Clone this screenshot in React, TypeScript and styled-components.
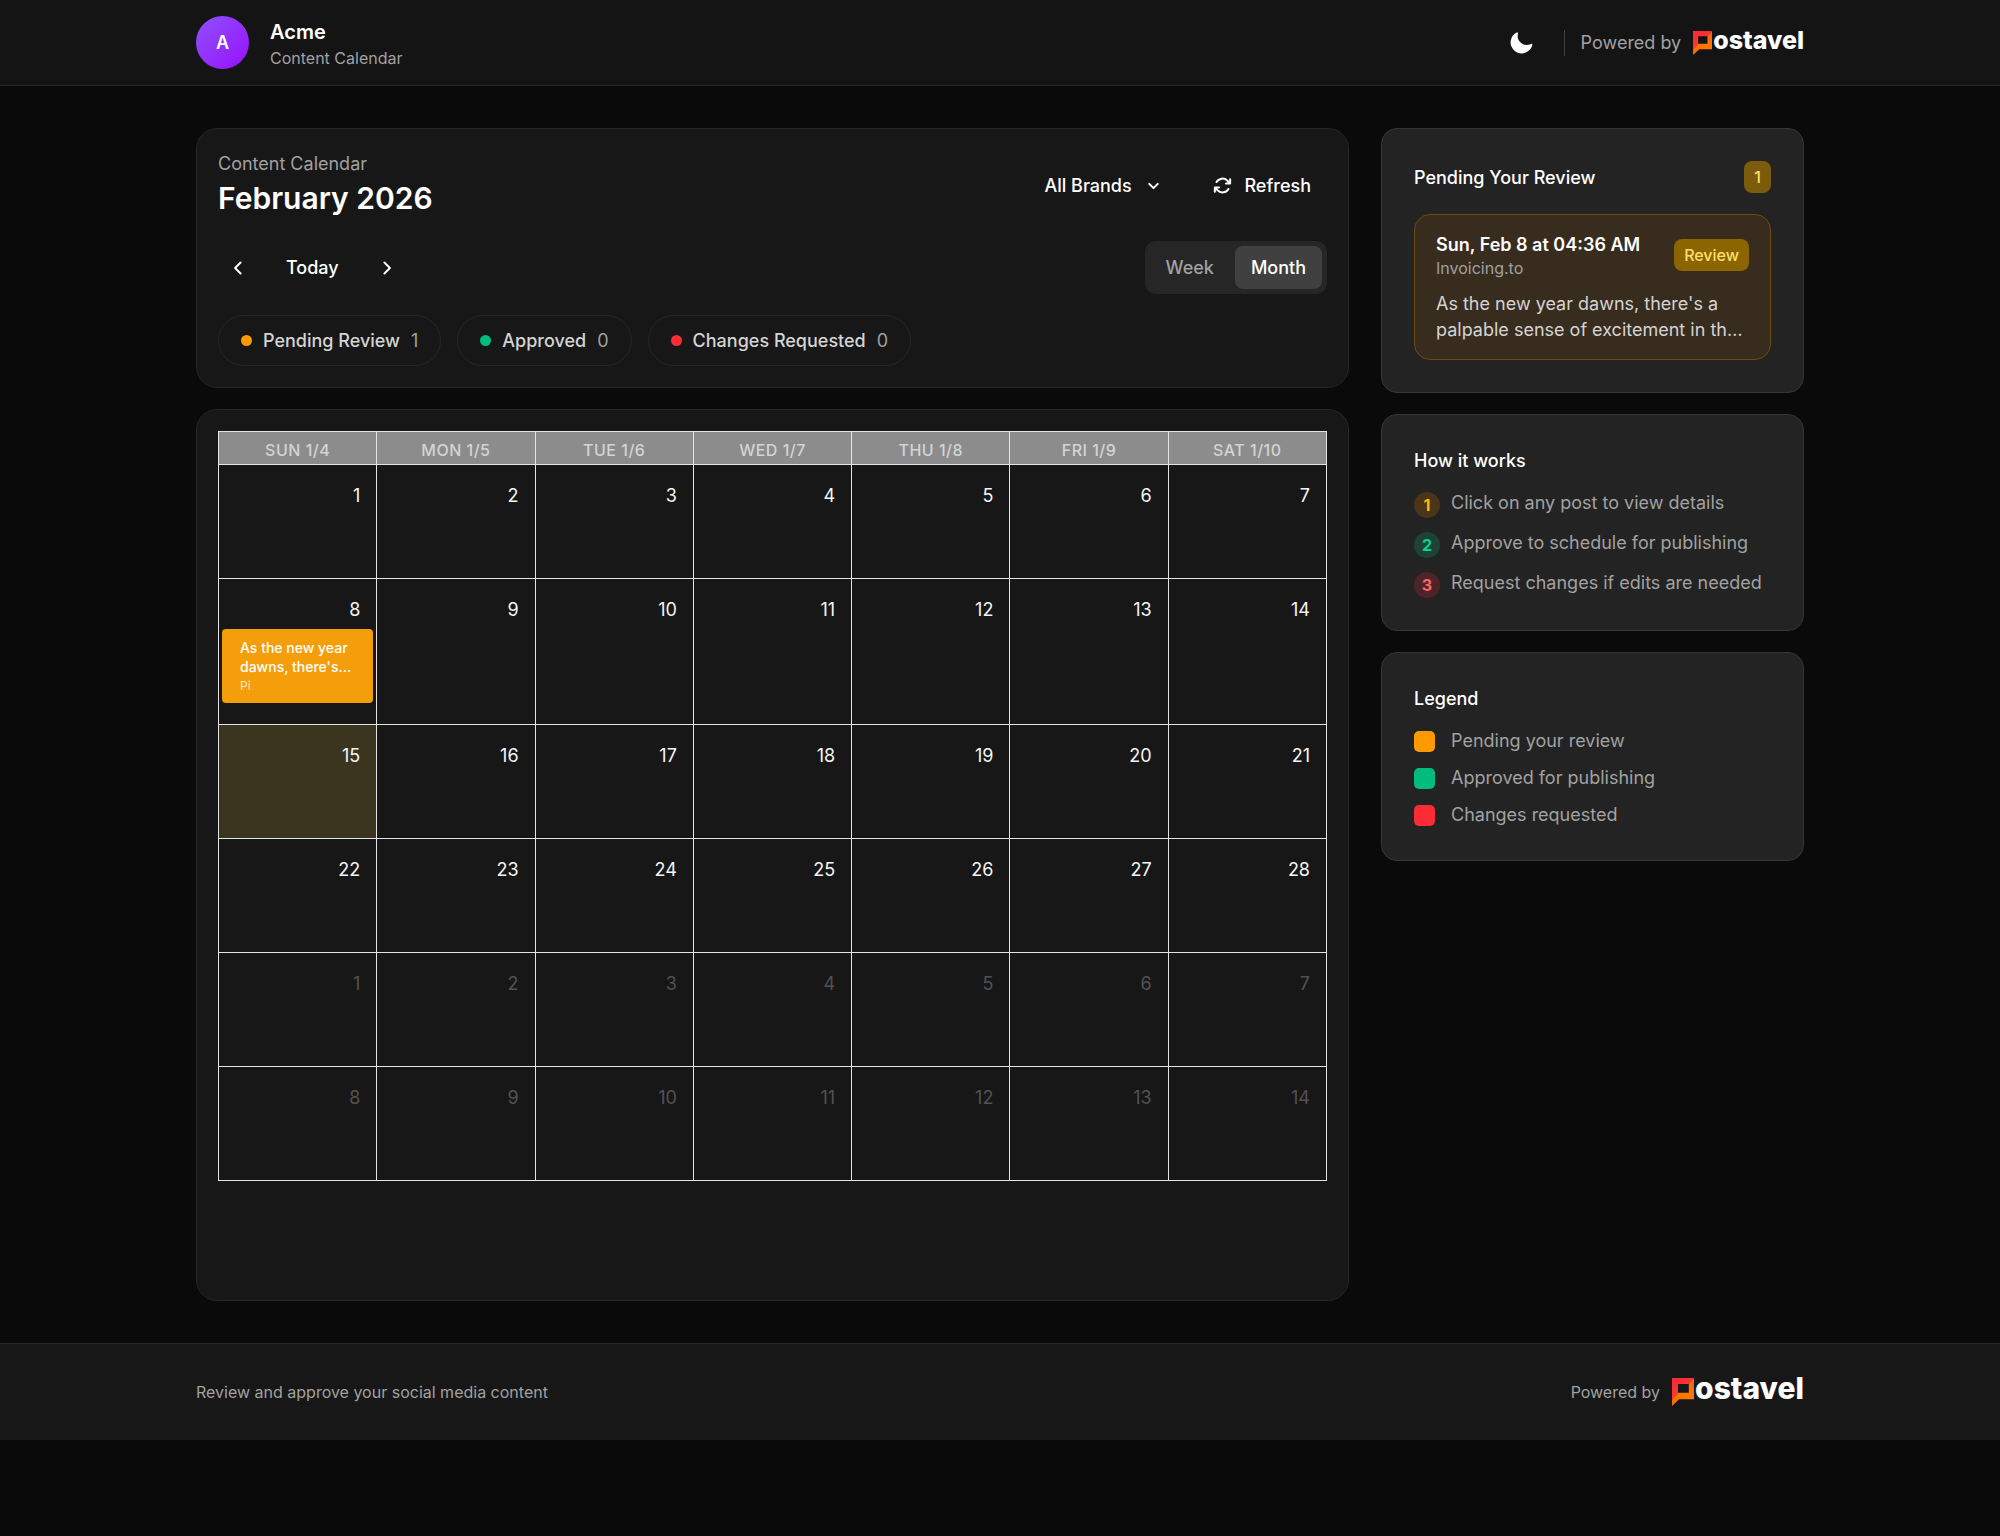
import React, { useState } from "react";
import styled, { createGlobalStyle } from "styled-components";

const GlobalStyle = createGlobalStyle`
  *, *::before, *::after { box-sizing: border-box; }
  body {
    margin: 0;
    background: #0a0a0a;
    color: #fff;
    font-family: Inter, "Liberation Sans", sans-serif;
    font-size: 18px;
    line-height: 27px;
  }
  h1, h2, p, ul, ol { margin: 0; padding: 0; font-weight: 400; }
  ul, ol { list-style: none; }
  button, select { font: inherit; color: inherit; background: none; border: 0; cursor: pointer; }
`;

/* ---------- shared ---------- */

const Container = styled.div`
  max-width: 1692px;
  margin: 0 auto;
  padding: 0 42px;
`;

const Icon = styled.svg<{ $size: number }>`
  display: block;
  flex: none;
  width: ${(p) => p.$size}px;
  height: ${(p) => p.$size}px;
  fill: currentColor;
`;

const Muted = styled.span<{ $small?: boolean }>`
  color: #a1a1a1;
  font-size: ${(p) => (p.$small ? 16 : 18)}px;
  line-height: ${(p) => (p.$small ? 21 : 27)}px;
`;

/* ---------- brand ---------- */

const BrandLink = styled.a<{ $large?: boolean }>`
  display: flex;
  align-items: flex-start;
  gap: 1px;
  color: #fff;
  text-decoration: none;
  font-weight: 800;
  font-size: ${(p) => (p.$large ? 30 : 25)}px;
  line-height: ${(p) => (p.$large ? 20 : 18)}px;
  svg {
    display: block;
    flex: none;
    width: ${(p) => (p.$large ? 22 : 19)}px;
    height: ${(p) => (p.$large ? 28 : 24)}px;
  }
`;

function Brand({ large }: { large?: boolean }) {
  const id = large ? "brand-lg" : "brand-sm";
  return (
    <BrandLink href="#postavel" $large={large}>
      <svg viewBox="0 0 55 70" preserveAspectRatio="none" aria-hidden="true">
        <defs>
          <linearGradient id={`${id}-r`} x1="0" y1="0" x2="0.6" y2="1">
            <stop offset="0.3" stopColor="#fb2c36" />
            <stop offset="1" stopColor="#f4511e" />
          </linearGradient>
          <linearGradient id={`${id}-o`} x1="1" y1="0" x2="0" y2="1">
            <stop offset="0" stopColor="#f4581c" />
            <stop offset="0.4" stopColor="#ff7a00" />
            <stop offset="1" stopColor="#ff6a00" />
          </linearGradient>
        </defs>
        <path fill={`url(#${id}-r)`} d="M0 0H55L42 15H15V37L0 58Z" />
        <path fill={`url(#${id}-o)`} d="M55 0V53H18L0 70V56L15 37H42V15Z" />
      </svg>
      <span>ostavel</span>
    </BrandLink>
  );
}

/* ---------- header ---------- */

const TopBar = styled.header`
  background: #141414;
  border-bottom: 1px solid #262626;
`;

const BarRow = styled(Container)<{ $pad: number }>`
  display: flex;
  align-items: center;
  justify-content: space-between;
  padding-top: ${(p) => p.$pad}px;
  padding-bottom: ${(p) => p.$pad}px;
`;

const Group = styled.div<{ $gap: number }>`
  display: flex;
  align-items: center;
  gap: ${(p) => p.$gap}px;
`;

const Avatar = styled.div`
  display: grid;
  place-items: center;
  width: 53px;
  height: 53px;
  border-radius: 50%;
  background: linear-gradient(135deg, #8e51ff, #9810fa);
  font-size: 18px;
  font-weight: 600;
`;

const Stack = styled.div`
  display: flex;
  flex-direction: column;
`;

const ClientName = styled.span`
  font-size: 20px;
  line-height: 32px;
  font-weight: 600;
`;

const ThemeButton = styled.button`
  padding: 13px;
`;

const Divider = styled.span`
  width: 1px;
  height: 26px;
  background: #404040;
  margin-left: 1px;
`;

/* ---------- page grid ---------- */

const Page = styled(Container)`
  display: grid;
  grid-template-columns: minmax(0, 1fr) 423px;
  gap: 32px;
  align-items: start;
  padding-top: 42px;
  padding-bottom: 42px;
`;

const Column = styled.div`
  display: flex;
  flex-direction: column;
  gap: 21px;
`;

const Panel = styled.section`
  background: #171717;
  border: 1px solid #262626;
  border-radius: 21px;
  padding: 21px;
  display: flex;
  flex-direction: column;
  gap: 21px;
`;

const CalendarPanel = styled(Panel)`
  min-height: 892px;
`;

const Row = styled.div`
  display: flex;
  align-items: center;
  justify-content: space-between;
`;

const Title = styled.h1`
  font-size: 30px;
  line-height: 43px;
  font-weight: 600;
`;

const Control = styled.button`
  display: flex;
  align-items: center;
  gap: 11px;
  padding: 13px 16px;
  border-radius: 11px;
  font-weight: 500;
`;

const BrandPicker = styled.label`
  display: flex;
  align-items: center;
  gap: 11px;
  padding: 13px 16px;
  font-weight: 500;
  select {
    appearance: none;
    padding: 0;
    outline: 0;
  }
`;

const NavButton = styled.button`
  display: grid;
  place-items: center;
  padding: 8px;
`;

const NavToday = styled(Control)`
  padding: 13px 21px;
`;

const Segments = styled.div`
  display: flex;
  gap: 5px;
  padding: 5px;
  border-radius: 11px;
  background: #262626;
`;

const Segment = styled.button<{ $active: boolean }>`
  padding: 8px 16px;
  border-radius: 8px;
  font-weight: 500;
  background: ${(p) => (p.$active ? "#404040" : "transparent")};
  color: ${(p) => (p.$active ? "#fff" : "#a1a1a1")};
`;

const Chip = styled.button`
  display: flex;
  align-items: center;
  gap: 11px;
  padding: 11px 22px;
  border: 1px solid #262626;
  border-radius: 26px;
  color: #d4d4d4;
  font-weight: 500;
`;

const Dot = styled.span<{ $color: string }>`
  width: 11px;
  height: 11px;
  border-radius: 50%;
  background: ${(p) => p.$color};
`;

const Count = styled.span`
  color: #a1a1a1;
  font-weight: 400;
`;

/* ---------- calendar ---------- */

const Grid = styled.table`
  width: 100%;
  table-layout: fixed;
  border-collapse: collapse;
  th, td { border: 1px solid #e5e5e5; }
`;

const DayHead = styled.th`
  height: 33px;
  padding: 5px 0 0;
  background: #8c8c8c;
  color: #d4d4d4;
  font-size: 16px;
  line-height: 21px;
  font-weight: 500;
  letter-spacing: 0.5px;
  text-transform: uppercase;
`;

const DayCell = styled.td<{ $today?: boolean; $other?: boolean; $tall?: boolean }>`
  height: ${(p) => (p.$tall ? 146 : 114)}px;
  padding: 17px 3px 0;
  vertical-align: top;
  background: ${(p) => (p.$today ? "#3b3520" : "transparent")};
  color: ${(p) => (p.$other ? "#525252" : "#f5f5f5")};
`;

const DayNumber = styled.div`
  padding-right: 13px;
  text-align: right;
`;

const EventCard = styled.button`
  display: flex;
  flex-direction: column;
  width: 100%;
  margin-top: 6px;
  padding: 9px 16px 8px 18px;
  border-radius: 4px;
  background: #f59e0b;
  color: #fff;
  text-align: left;
  font-size: 14px;
  line-height: 19px;
  font-weight: 500;
`;

const EventText = styled.span`
  white-space: nowrap;
`;

const EventTag = styled.span`
  font-size: 12px;
  font-weight: 400;
  opacity: 0.75;
`;

/* ---------- sidebar ---------- */

const SideCard = styled.section`
  background: #232323;
  border: 1px solid #363636;
  border-radius: 16px;
  padding: 32px;
`;

const SideTitle = styled.h2`
  font-size: 18px;
  line-height: 27px;
  font-weight: 500;
`;

const Badge = styled.span`
  flex: none;
  padding: 5px 10px;
  border-radius: 8px;
  background: #7b5c0c;
  color: #ffdf6b;
  font-size: 16px;
  line-height: 22px;
  font-weight: 500;
`;

const ReviewBadge = styled(Badge)`
  background: #8a6500;
`;

const ReviewCard = styled.button`
  display: flex;
  flex-direction: column;
  gap: 12px;
  width: 100%;
  margin-top: 21px;
  padding: 16px 21px;
  border: 1px solid #704b0c;
  border-radius: 16px;
  background: #372c1e;
  text-align: left;
`;

const ReviewHead = styled(Row)`
  width: 100%;
`;

const ReviewDate = styled.span`
  line-height: 27px;
  font-weight: 600;
`;

const Excerpt = styled.span`
  color: #d4d4d4;
  line-height: 26px;
`;

const List = styled.ul<{ $gap: number }>`
  display: flex;
  flex-direction: column;
  gap: ${(p) => p.$gap}px;
  margin-top: 16px;
  color: #a1a1a1;
  line-height: 26px;
`;

const Step = styled.li`
  display: flex;
  align-items: flex-start;
  gap: 11px;
`;

const StepNumber = styled.span<{ $bg: string; $fg: string }>`
  display: grid;
  place-items: center;
  width: 26px;
  height: 26px;
  margin-top: 2px;
  border-radius: 50%;
  background: ${(p) => p.$bg};
  color: ${(p) => p.$fg};
  font-size: 16px;
  font-weight: 700;
`;

const LegendItem = styled.li`
  display: flex;
  align-items: center;
  gap: 16px;
`;

const Swatch = styled.span<{ $color: string }>`
  width: 21px;
  height: 21px;
  border-radius: 5px;
  background: ${(p) => p.$color};
`;

const Footer = styled.footer`
  background: #171717;
  border-top: 1px solid #262626;
`;

/* ---------- data ---------- */

const AMBER = "#fe9a00";
const GREEN = "#00bc7d";
const RED = "#fb2c36";

const dayHeads = ["Sun 1/4", "Mon 1/5", "Tue 1/6", "Wed 1/7", "Thu 1/8", "Fri 1/9", "Sat 1/10"];

const statuses = [
  { label: "Pending Review", count: 1, color: AMBER },
  { label: "Approved", count: 0, color: GREEN },
  { label: "Changes Requested", count: 0, color: RED },
];

const steps = [
  { text: "Click on any post to view details", bg: "#4b3518", fg: "#fcb700" },
  { text: "Approve to schedule for publishing", bg: "#1f4235", fg: "#00d492" },
  { text: "Request changes if edits are needed", bg: "#4d2528", fg: "#ff6467" },
];

const legend = [
  { text: "Pending your review", color: AMBER },
  { text: "Approved for publishing", color: GREEN },
  { text: "Changes requested", color: RED },
];

const weeks = Array.from({ length: 6 }, (_, w) =>
  Array.from({ length: 7 }, (_, d) => {
    const n = w * 7 + d + 1;
    return { day: n > 28 ? n - 28 : n, other: n > 28 };
  })
);

export default function App() {
  const [view, setView] = useState("Month");
  return (
    <>
      <GlobalStyle />
      <TopBar>
        <BarRow $pad={16}>
          <Group $gap={21}>
            <Avatar>A</Avatar>
            <Stack>
              <ClientName>Acme</ClientName>
              <Muted $small>Content Calendar</Muted>
            </Stack>
          </Group>
          <Group $gap={16}>
            <ThemeButton aria-label="Toggle theme">
              <Icon $size={26} viewBox="0 0 20 20">
                <path d="M7.455 2.004a.75.75 0 0 1 .26.77 7 7 0 0 0 9.958 7.967.75.75 0 0 1 1.067.853A8.5 8.5 0 1 1 6.647 1.921a.75.75 0 0 1 .808.083Z" />
              </Icon>
            </ThemeButton>
            <Divider />
            <Group $gap={12}>
              <Muted>Powered by</Muted>
              <Brand />
            </Group>
          </Group>
        </BarRow>
      </TopBar>

      <Page as="main">
        <Column>
          <Panel>
            <Row>
              <Stack>
                <Muted>Content Calendar</Muted>
                <Title>February 2026</Title>
              </Stack>
              <Group $gap={16}>
                <BrandPicker>
                  <select aria-label="Brand">
                    <option>All Brands</option>
                  </select>
                  <Icon $size={21} viewBox="0 0 16 16">
                    <path d="M4.22 6.22a.75.75 0 0 1 1.06 0L8 8.94l2.72-2.72a.75.75 0 1 1 1.06 1.06l-3.25 3.25a.75.75 0 0 1-1.06 0L4.22 7.28a.75.75 0 0 1 0-1.06Z" />
                  </Icon>
                </BrandPicker>
                <Control>
                  <Icon $size={21} viewBox="0 0 16 16">
                    <path d="M13.836 2.477a.75.75 0 0 1 .75.75v3.182a.75.75 0 0 1-.75.75h-3.182a.75.75 0 0 1 0-1.5h1.37l-.84-.841a4.5 4.5 0 0 0-7.08.932.75.75 0 0 1-1.3-.75 6 6 0 0 1 9.44-1.242l.842.84V3.227a.75.75 0 0 1 .75-.75Zm-.911 7.5A.75.75 0 0 1 13.199 11a6 6 0 0 1-9.44 1.241l-.84-.84v1.371a.75.75 0 0 1-1.5 0V9.591a.75.75 0 0 1 .75-.75H5.35a.75.75 0 0 1 0 1.5H3.98l.841.841a4.5 4.5 0 0 0 7.08-.932.75.75 0 0 1 1.025-.273Z" />
                  </Icon>
                  Refresh
                </Control>
              </Group>
            </Row>

            <Row>
              <Group $gap={5}>
                <NavButton aria-label="Previous">
                  <Icon $size={26} viewBox="0 0 20 20">
                    <path d="M11.78 5.22a.75.75 0 0 1 0 1.06L8.06 10l3.72 3.72a.75.75 0 1 1-1.06 1.06l-4.25-4.25a.75.75 0 0 1 0-1.06l4.25-4.25a.75.75 0 0 1 1.06 0Z" />
                  </Icon>
                </NavButton>
                <NavToday>Today</NavToday>
                <NavButton aria-label="Next">
                  <Icon $size={26} viewBox="0 0 20 20">
                    <path d="M8.22 5.22a.75.75 0 0 1 1.06 0l4.25 4.25a.75.75 0 0 1 0 1.06l-4.25 4.25a.75.75 0 0 1-1.06-1.06L11.94 10 8.22 6.28a.75.75 0 0 1 0-1.06Z" />
                  </Icon>
                </NavButton>
              </Group>
              <Segments>
                {["Week", "Month"].map((v) => (
                  <Segment key={v} $active={view === v} aria-pressed={view === v} onClick={() => setView(v)}>
                    {v}
                  </Segment>
                ))}
              </Segments>
            </Row>

            <Group $gap={16}>
              {statuses.map((s) => (
                <Chip key={s.label}>
                  <Dot $color={s.color} />
                  {s.label}
                  <Count>{s.count}</Count>
                </Chip>
              ))}
            </Group>
          </Panel>

          <CalendarPanel>
            <Grid>
              <thead>
                <tr>
                  {dayHeads.map((d) => (
                    <DayHead key={d} scope="col">{d}</DayHead>
                  ))}
                </tr>
              </thead>
              <tbody>
                {weeks.map((week, w) => (
                  <tr key={w}>
                    {week.map((c, d) => (
                      <DayCell key={d} $other={c.other} $today={w === 2 && d === 0} $tall={w === 1}>
                        <DayNumber>{c.day}</DayNumber>
                        {w === 1 && d === 0 && (
                          <EventCard>
                            <EventText>As the new year</EventText>
                            <EventText>dawns, there's...</EventText>
                            <EventTag>Pi</EventTag>
                          </EventCard>
                        )}
                      </DayCell>
                    ))}
                  </tr>
                ))}
              </tbody>
            </Grid>
          </CalendarPanel>
        </Column>

        <Column as="aside">
          <SideCard>
            <Row>
              <SideTitle>Pending Your Review</SideTitle>
              <Badge>1</Badge>
            </Row>
            <ReviewCard>
              <ReviewHead>
                <Stack>
                  <ReviewDate>Sun, Feb 8 at 04:36 AM</ReviewDate>
                  <Muted $small>Invoicing.to</Muted>
                </Stack>
                <ReviewBadge>Review</ReviewBadge>
              </ReviewHead>
              <Excerpt>As the new year dawns, there's a palpable sense of excitement in th…</Excerpt>
            </ReviewCard>
          </SideCard>

          <SideCard>
            <SideTitle>How it works</SideTitle>
            <List as="ol" $gap={12}>
              {steps.map((s, i) => (
                <Step key={s.text}>
                  <StepNumber $bg={s.bg} $fg={s.fg}>{i + 1}</StepNumber>
                  {s.text}
                </Step>
              ))}
            </List>
          </SideCard>

          <SideCard>
            <SideTitle>Legend</SideTitle>
            <List $gap={11}>
              {legend.map((l) => (
                <LegendItem key={l.text}>
                  <Swatch $color={l.color} />
                  {l.text}
                </LegendItem>
              ))}
            </List>
          </SideCard>
        </Column>
      </Page>

      <Footer>
        <BarRow $pad={34}>
          <Muted $small>Review and approve your social media content</Muted>
          <Group $gap={12}>
            <Muted $small>Powered by</Muted>
            <Brand large />
          </Group>
        </BarRow>
      </Footer>
    </>
  );
}
